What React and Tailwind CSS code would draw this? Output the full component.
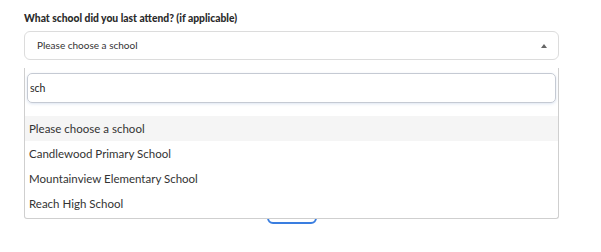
import React, { useState } from "react";

const options = [
  "Please choose a school",
  "Candlewood Primary School",
  "Mountainview Elementary School",
  "Reach High School",
];

/* ---------------- School Select ---------------- */
export default function App() {
  const [query, setQuery] = useState("sch");
  const [active] = useState(0);

  return (
    <div className="relative w-[601px] h-[252px] bg-white font-['Lato','Open_Sans',sans-serif] text-[#333]">
      {/* ---------- Form ---------- */}
      <div className="pl-6 pr-[42px] pt-[10px]">
        <label className="block text-[10.3px] font-black leading-[16px] text-[#2b2b2b]">
          What school did you last attend? (if applicable)
        </label>

        <div className="mt-[5px] h-[29px] border border-[#dcdcdc] rounded-[6px] flex items-center justify-between pl-3 pr-[11px]">
          <span className="text-[10px] text-[#333]">Please choose a school</span>
          <span className="w-0 h-0 border-l-[3px] border-r-[3px] border-b-[4px] border-l-transparent border-r-transparent border-b-[#666]" />
        </div>

        <div className="mt-[133px] flex justify-center">
          <button className="w-[50px] h-[31px] border-2 border-[#3a7ee0] rounded-[6px]" />
        </div>
      </div>

      {/* ---------- Dropdown ---------- */}
      <div className="absolute left-6 top-[68px] w-[535px] h-[151px] bg-white border border-t-0 border-[#cfcfcf] rounded-b-[3px] flex flex-col">
        <div className="px-[2px] pt-[5px]">
          <input
            value={query}
            onChange={(e) => setQuery(e.target.value)}
            className="w-full h-[30px] px-[2px] rounded-[5px] border border-[#c5cad3] shadow-[0_1px_3px_rgba(120,150,200,0.25)] text-[10.5px] text-[#222] outline-none"
          />
        </div>

        <ul className="mt-[13px]">
          {options.map((o, i) => (
            <li
              key={o}
              className={`h-[25px] flex items-center pl-[4px] pt-[1px] text-[11.5px] text-[#333] ${
                i === active ? "bg-[#f5f5f5]" : ""
              }`}
            >
              {o}
            </li>
          ))}
        </ul>
      </div>
    </div>
  );
}
